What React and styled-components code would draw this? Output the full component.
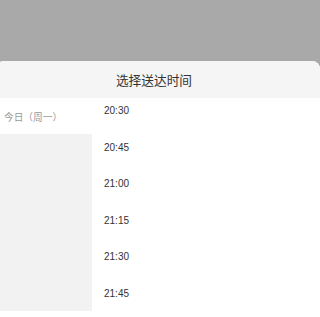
import React from "react";
import styled, { createGlobalStyle } from "styled-components";

const Global = createGlobalStyle`
  html, body { margin: 0; padding: 0; }
  body {
    height: 317px; overflow: hidden;
    background: #a9a9a9;
    font-family: "Noto Sans CJK SC", "Liberation Sans", sans-serif;
  }
`;

const Screen = styled.div`
  width: 100vw;
  height: 317px;
  display: flex;
  flex-direction: column;
  overflow: hidden;
`;

const Mask = styled.div`
  height: 61px;
  flex: none;
`;

const Sheet = styled.div`
  flex: 1;
  margin-left: -4px;
  width: calc(100% + 4px);
  background: #fff;
  border-radius: 8px 8px 0 0;
  overflow: hidden;
  display: flex;
  flex-direction: column;
`;

const Header = styled.div`
  height: 37px;
  flex: none;
  background: #f5f5f5;
  display: flex;
  align-items: center;
  justify-content: center;
  font-size: 12.7px;
  color: #333;
  padding-bottom: 1px;
  padding-right: calc(100% - 316px);
  box-sizing: border-box;
`;

const Body = styled.div`
  height: 213px;
  flex: none;
  display: flex;
`;

const Days = styled.div`
  width: 96px;
  background: #f2f2f2;
  display: flex;
  flex-direction: column;
`;

const Day = styled.div`
  height: 36px;
  display: flex;
  align-items: center;
  padding-left: 8px;
  padding-top: 2px;
  box-sizing: border-box;
  font-size: 9.7px;
  color: ${(p) => (p.$active ? "#999" : "#666")};
  background: ${(p) => (p.$active ? "#fff" : "transparent")};
`;

const Times = styled.div`
  flex: 1;
  background: #fff;
  display: flex;
  flex-direction: column;
  overflow: hidden;
`;

const Time = styled.div`
  height: 36.5px;
  flex: none;
  box-sizing: border-box;
  padding: 6px 0 0 12px;
  line-height: 14px;
  font-family: "Liberation Sans", Arial, sans-serif;
  font-size: 10px;
  color: #333;
`;

const Footer = styled.div`
  flex: 1;
  background: #fff;
`;

const times = ["20:30", "20:45", "21:00", "21:15", "21:30", "21:45"];

export default function App() {
  return (
    <Screen>
      <Global />
      <Mask />
      <Sheet>
        <Header>选择送达时间</Header>
        <Body>
          <Days>
            <Day $active>今日（周一）</Day>
          </Days>
          <Times>
            {times.map((t) => (
              <Time key={t}>{t}</Time>
            ))}
          </Times>
        </Body>
        <Footer />
      </Sheet>
    </Screen>
  );
}
